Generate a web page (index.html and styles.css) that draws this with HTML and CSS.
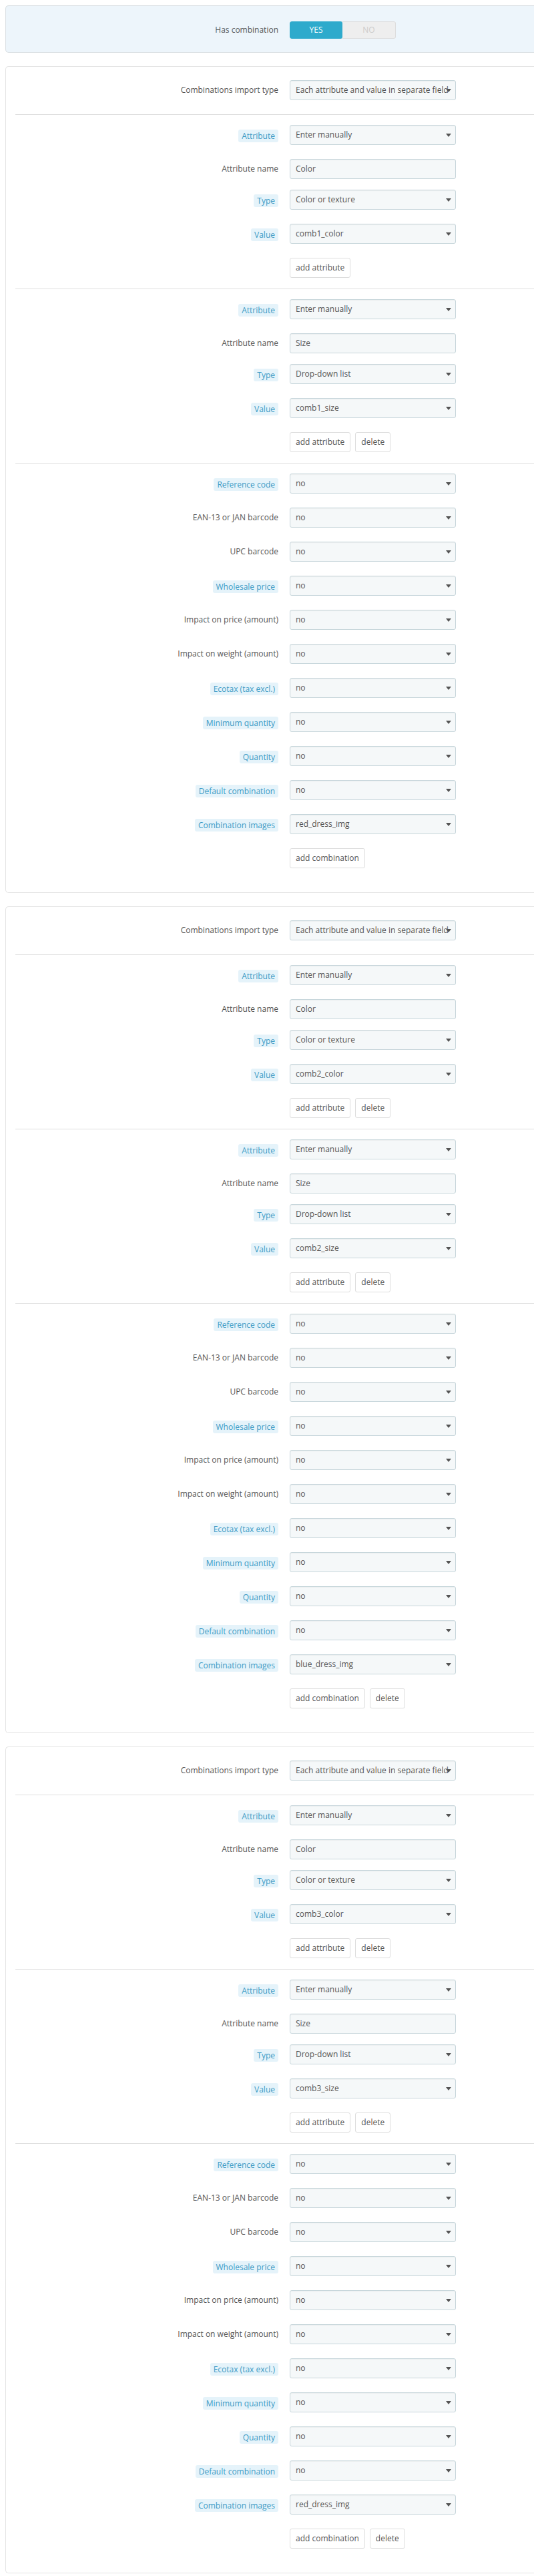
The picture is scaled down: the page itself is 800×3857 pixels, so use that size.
FILE: index.html
```html
<!DOCTYPE html>
<html>
<head>
<meta charset="utf-8">
<link rel="stylesheet" href="styles.css">
</head>
<body>
<div class="panel panel-info">
  <div class="row row-toggle">
    <div class="lbl"><span class="txt">Has combination</span></div>
    <div class="ctrl">
      <div class="switch"><span class="sw-on">YES</span><span class="sw-off">NO</span></div>
    </div>
  </div>
</div>

<div class="panel">
  <div class="row row-sel"><div class="lbl"><span class="txt">Combinations import type</span></div><div class="ctrl"><div class="select">Each attribute and value in separate field</div></div></div>
  <div class="sep"></div>
  <div class="row row-sel"><div class="lbl"><span class="tip">Attribute</span></div><div class="ctrl"><div class="select">Enter manually</div></div></div>
  <div class="row row-in"><div class="lbl"><span class="txt">Attribute name</span></div><div class="ctrl"><div class="input">Color</div></div></div>
  <div class="row row-sel"><div class="lbl"><span class="tip">Type</span></div><div class="ctrl"><div class="select">Color or texture</div></div></div>
  <div class="row row-sel"><div class="lbl"><span class="tip">Value</span></div><div class="ctrl"><div class="select">comb1_color</div></div></div>
  <div class="row row-btn"><div class="lbl"></div><div class="ctrl btns"><button class="btn">add attribute</button></div></div>
  <div class="sep"></div>
  <div class="row row-sel"><div class="lbl"><span class="tip">Attribute</span></div><div class="ctrl"><div class="select">Enter manually</div></div></div>
  <div class="row row-in"><div class="lbl"><span class="txt">Attribute name</span></div><div class="ctrl"><div class="input">Size</div></div></div>
  <div class="row row-sel"><div class="lbl"><span class="tip">Type</span></div><div class="ctrl"><div class="select">Drop-down list</div></div></div>
  <div class="row row-sel"><div class="lbl"><span class="tip">Value</span></div><div class="ctrl"><div class="select">comb1_size</div></div></div>
  <div class="row row-btn"><div class="lbl"></div><div class="ctrl btns"><button class="btn">add attribute</button><button class="btn">delete</button></div></div>
  <div class="sep"></div>
  <div class="row row-sel"><div class="lbl"><span class="tip">Reference code</span></div><div class="ctrl"><div class="select">no</div></div></div>
  <div class="row row-sel"><div class="lbl"><span class="txt">EAN-13 or JAN barcode</span></div><div class="ctrl"><div class="select">no</div></div></div>
  <div class="row row-sel"><div class="lbl"><span class="txt">UPC barcode</span></div><div class="ctrl"><div class="select">no</div></div></div>
  <div class="row row-sel"><div class="lbl"><span class="tip">Wholesale price</span></div><div class="ctrl"><div class="select">no</div></div></div>
  <div class="row row-sel"><div class="lbl"><span class="txt">Impact on price (amount)</span></div><div class="ctrl"><div class="select">no</div></div></div>
  <div class="row row-sel"><div class="lbl"><span class="txt">Impact on weight (amount)</span></div><div class="ctrl"><div class="select">no</div></div></div>
  <div class="row row-sel"><div class="lbl"><span class="tip">Ecotax (tax excl.)</span></div><div class="ctrl"><div class="select">no</div></div></div>
  <div class="row row-sel"><div class="lbl"><span class="tip">Minimum quantity</span></div><div class="ctrl"><div class="select">no</div></div></div>
  <div class="row row-sel"><div class="lbl"><span class="tip">Quantity</span></div><div class="ctrl"><div class="select">no</div></div></div>
  <div class="row row-sel"><div class="lbl"><span class="tip">Default combination</span></div><div class="ctrl"><div class="select">no</div></div></div>
  <div class="row row-sel"><div class="lbl"><span class="tip">Combination images</span></div><div class="ctrl"><div class="select">red_dress_img</div></div></div>
  <div class="row row-btn"><div class="lbl"></div><div class="ctrl btns"><button class="btn">add combination</button></div></div>
</div>

<div class="panel">
  <div class="row row-sel"><div class="lbl"><span class="txt">Combinations import type</span></div><div class="ctrl"><div class="select">Each attribute and value in separate field</div></div></div>
  <div class="sep"></div>
  <div class="row row-sel"><div class="lbl"><span class="tip">Attribute</span></div><div class="ctrl"><div class="select">Enter manually</div></div></div>
  <div class="row row-in"><div class="lbl"><span class="txt">Attribute name</span></div><div class="ctrl"><div class="input">Color</div></div></div>
  <div class="row row-sel"><div class="lbl"><span class="tip">Type</span></div><div class="ctrl"><div class="select">Color or texture</div></div></div>
  <div class="row row-sel"><div class="lbl"><span class="tip">Value</span></div><div class="ctrl"><div class="select">comb2_color</div></div></div>
  <div class="row row-btn"><div class="lbl"></div><div class="ctrl btns"><button class="btn">add attribute</button><button class="btn">delete</button></div></div>
  <div class="sep"></div>
  <div class="row row-sel"><div class="lbl"><span class="tip">Attribute</span></div><div class="ctrl"><div class="select">Enter manually</div></div></div>
  <div class="row row-in"><div class="lbl"><span class="txt">Attribute name</span></div><div class="ctrl"><div class="input">Size</div></div></div>
  <div class="row row-sel"><div class="lbl"><span class="tip">Type</span></div><div class="ctrl"><div class="select">Drop-down list</div></div></div>
  <div class="row row-sel"><div class="lbl"><span class="tip">Value</span></div><div class="ctrl"><div class="select">comb2_size</div></div></div>
  <div class="row row-btn"><div class="lbl"></div><div class="ctrl btns"><button class="btn">add attribute</button><button class="btn">delete</button></div></div>
  <div class="sep"></div>
  <div class="row row-sel"><div class="lbl"><span class="tip">Reference code</span></div><div class="ctrl"><div class="select">no</div></div></div>
  <div class="row row-sel"><div class="lbl"><span class="txt">EAN-13 or JAN barcode</span></div><div class="ctrl"><div class="select">no</div></div></div>
  <div class="row row-sel"><div class="lbl"><span class="txt">UPC barcode</span></div><div class="ctrl"><div class="select">no</div></div></div>
  <div class="row row-sel"><div class="lbl"><span class="tip">Wholesale price</span></div><div class="ctrl"><div class="select">no</div></div></div>
  <div class="row row-sel"><div class="lbl"><span class="txt">Impact on price (amount)</span></div><div class="ctrl"><div class="select">no</div></div></div>
  <div class="row row-sel"><div class="lbl"><span class="txt">Impact on weight (amount)</span></div><div class="ctrl"><div class="select">no</div></div></div>
  <div class="row row-sel"><div class="lbl"><span class="tip">Ecotax (tax excl.)</span></div><div class="ctrl"><div class="select">no</div></div></div>
  <div class="row row-sel"><div class="lbl"><span class="tip">Minimum quantity</span></div><div class="ctrl"><div class="select">no</div></div></div>
  <div class="row row-sel"><div class="lbl"><span class="tip">Quantity</span></div><div class="ctrl"><div class="select">no</div></div></div>
  <div class="row row-sel"><div class="lbl"><span class="tip">Default combination</span></div><div class="ctrl"><div class="select">no</div></div></div>
  <div class="row row-sel"><div class="lbl"><span class="tip">Combination images</span></div><div class="ctrl"><div class="select">blue_dress_img</div></div></div>
  <div class="row row-btn"><div class="lbl"></div><div class="ctrl btns"><button class="btn">add combination</button><button class="btn">delete</button></div></div>
</div>

<div class="panel">
  <div class="row row-sel"><div class="lbl"><span class="txt">Combinations import type</span></div><div class="ctrl"><div class="select">Each attribute and value in separate field</div></div></div>
  <div class="sep"></div>
  <div class="row row-sel"><div class="lbl"><span class="tip">Attribute</span></div><div class="ctrl"><div class="select">Enter manually</div></div></div>
  <div class="row row-in"><div class="lbl"><span class="txt">Attribute name</span></div><div class="ctrl"><div class="input">Color</div></div></div>
  <div class="row row-sel"><div class="lbl"><span class="tip">Type</span></div><div class="ctrl"><div class="select">Color or texture</div></div></div>
  <div class="row row-sel"><div class="lbl"><span class="tip">Value</span></div><div class="ctrl"><div class="select">comb3_color</div></div></div>
  <div class="row row-btn"><div class="lbl"></div><div class="ctrl btns"><button class="btn">add attribute</button><button class="btn">delete</button></div></div>
  <div class="sep"></div>
  <div class="row row-sel"><div class="lbl"><span class="tip">Attribute</span></div><div class="ctrl"><div class="select">Enter manually</div></div></div>
  <div class="row row-in"><div class="lbl"><span class="txt">Attribute name</span></div><div class="ctrl"><div class="input">Size</div></div></div>
  <div class="row row-sel"><div class="lbl"><span class="tip">Type</span></div><div class="ctrl"><div class="select">Drop-down list</div></div></div>
  <div class="row row-sel"><div class="lbl"><span class="tip">Value</span></div><div class="ctrl"><div class="select">comb3_size</div></div></div>
  <div class="row row-btn"><div class="lbl"></div><div class="ctrl btns"><button class="btn">add attribute</button><button class="btn">delete</button></div></div>
  <div class="sep"></div>
  <div class="row row-sel"><div class="lbl"><span class="tip">Reference code</span></div><div class="ctrl"><div class="select">no</div></div></div>
  <div class="row row-sel"><div class="lbl"><span class="txt">EAN-13 or JAN barcode</span></div><div class="ctrl"><div class="select">no</div></div></div>
  <div class="row row-sel"><div class="lbl"><span class="txt">UPC barcode</span></div><div class="ctrl"><div class="select">no</div></div></div>
  <div class="row row-sel"><div class="lbl"><span class="tip">Wholesale price</span></div><div class="ctrl"><div class="select">no</div></div></div>
  <div class="row row-sel"><div class="lbl"><span class="txt">Impact on price (amount)</span></div><div class="ctrl"><div class="select">no</div></div></div>
  <div class="row row-sel"><div class="lbl"><span class="txt">Impact on weight (amount)</span></div><div class="ctrl"><div class="select">no</div></div></div>
  <div class="row row-sel"><div class="lbl"><span class="tip">Ecotax (tax excl.)</span></div><div class="ctrl"><div class="select">no</div></div></div>
  <div class="row row-sel"><div class="lbl"><span class="tip">Minimum quantity</span></div><div class="ctrl"><div class="select">no</div></div></div>
  <div class="row row-sel"><div class="lbl"><span class="tip">Quantity</span></div><div class="ctrl"><div class="select">no</div></div></div>
  <div class="row row-sel"><div class="lbl"><span class="tip">Default combination</span></div><div class="ctrl"><div class="select">no</div></div></div>
  <div class="row row-sel"><div class="lbl"><span class="tip">Combination images</span></div><div class="ctrl"><div class="select">red_dress_img</div></div></div>
  <div class="row row-btn"><div class="lbl"></div><div class="ctrl btns"><button class="btn">add combination</button><button class="btn">delete</button></div></div>
</div>
</body>
</html>
```

FILE: styles.css
```css
body {
  margin: 8px 0 8px 8px;
  background: #ffffff;
  font-family: "Open Sans", "Liberation Sans", sans-serif;
  font-size: 12px;
  color: #555555;
}
.panel {
  margin: 0 0 20px 0;
  padding: 20px 0 20px 14px;
  border: 1px solid #e3e3e3;
  border-right: 0;
  border-radius: 5px 0 0 5px;
  background: #ffffff;
}
.panel-info {
  padding-top: 23px;
  padding-bottom: 20px;
  background: #edf5fb;
  border-color: #d9dfe2;
}
.row {
  display: flex;
  align-items: flex-start;
}
.row-sel {
  margin-bottom: 21px;
}
.row-in,
.row-btn {
  margin-bottom: 16px;
}
.row-toggle {
  margin-bottom: 0;
}
.lbl {
  width: 394px;
  flex: none;
  text-align: right;
}
.lbl .txt {
  display: inline-block;
  line-height: 30px;
  color: #555555;
}
.row-toggle .lbl .txt {
  line-height: 26px;
}
.lbl .tip {
  display: inline-block;
  margin-top: 7px;
  padding: 0 5px;
  line-height: 19px;
  border-radius: 3px;
  background: #e5f3fa;
  color: #3a9ac5;
}
.ctrl {
  margin-left: 17px;
  width: 249px;
  flex: none;
}
.select,
.input {
  position: relative;
  box-sizing: border-box;
  height: 30px;
  line-height: 28px;
  padding: 0 0 0 8px;
  border: 1px solid #c7d6db;
  border-radius: 3px;
  background: #f5f8f9;
  box-shadow: inset 0 1px 1px rgba(0, 0, 0, 0.04);
  color: #555555;
  white-space: nowrap;
  overflow: hidden;
}
.select::after {
  content: "";
  position: absolute;
  right: 6px;
  top: 12px;
  width: 0;
  height: 0;
  border-left: 4px solid transparent;
  border-right: 4px solid transparent;
  border-top: 5px solid #555555;
}
.btns {
  display: flex;
  gap: 7px;
}
.btn {
  box-sizing: border-box;
  height: 30px;
  padding: 0 8px;
  border: 1px solid #dddddd;
  border-radius: 3px;
  background: #ffffff;
  font-family: "Open Sans", "Liberation Sans", sans-serif;
  font-size: 12px;
  color: #555555;
  line-height: 28px;
}
.sep {
  height: 1px;
  margin: 0 0 15px 0;
  background: #dedede;
}
.switch {
  display: flex;
  width: 159px;
  height: 26px;
  box-sizing: border-box;
  border-radius: 3px;
  overflow: hidden;
  background: #eeeeee;
  font-size: 12px;
  text-transform: uppercase;
  line-height: 26px;
  text-align: center;
}
.sw-on {
  width: 79px;
  border-radius: 3px;
  background: #2eaacc;
  color: #ffffff;
}
.sw-off {
  flex: 1;
  box-sizing: border-box;
  background: #eeeeee;
  color: #cccccc;
  border: 1px solid #dddddd;
  border-left: none;
  border-radius: 0 3px 3px 0;
  line-height: 24px;
}
```
